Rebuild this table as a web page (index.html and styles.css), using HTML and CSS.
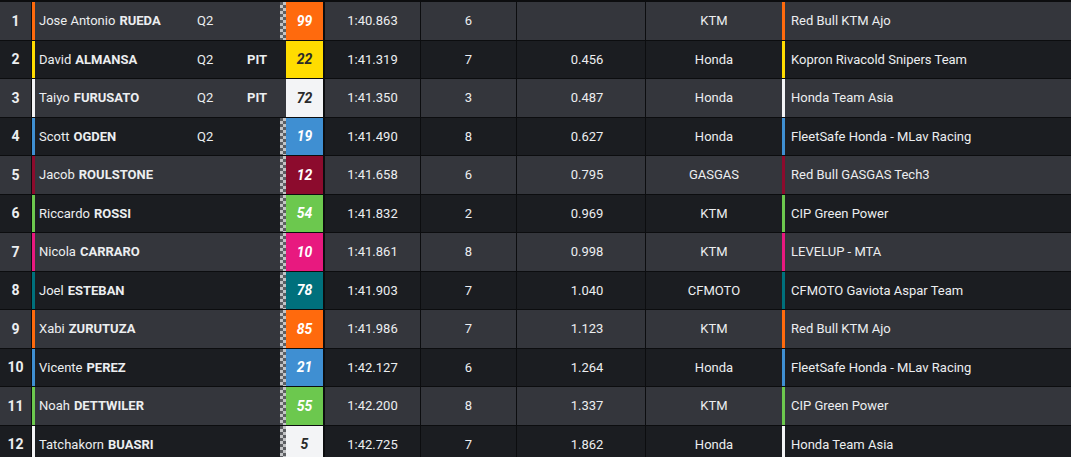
FILE: index.html
```html
<!DOCTYPE html>
<html>
<head>
<meta charset="utf-8">
<link rel="stylesheet" href="styles.css">
</head>
<body>
<div class="table">
  <div class="row odd">
    <div class="pos">1</div><div class="bar c-ktm"></div>
    <div class="name">Jose Antonio <b>RUEDA</b></div><div class="q">Q2</div><div class="pit"></div>
    <div class="chk"></div><div class="num c-ktm">99</div>
    <div class="time">1:40.863</div><div class="laps">6</div><div class="gap"></div>
    <div class="mfr">KTM</div><div class="bar c-ktm"></div><div class="team">Red Bull KTM Ajo</div>
  </div>
  <div class="row even">
    <div class="pos">2</div><div class="bar c-kopron"></div>
    <div class="name">David <b>ALMANSA</b></div><div class="q">Q2</div><div class="pit">PIT</div>
    <div class="chk off"></div><div class="num c-kopron dark">22</div>
    <div class="time">1:41.319</div><div class="laps">7</div><div class="gap">0.456</div>
    <div class="mfr">Honda</div><div class="bar c-kopron"></div><div class="team">Kopron Rivacold Snipers Team</div>
  </div>
  <div class="row odd">
    <div class="pos">3</div><div class="bar c-asia"></div>
    <div class="name">Taiyo <b>FURUSATO</b></div><div class="q">Q2</div><div class="pit">PIT</div>
    <div class="chk off"></div><div class="num c-asia dark">72</div>
    <div class="time">1:41.350</div><div class="laps">3</div><div class="gap">0.487</div>
    <div class="mfr">Honda</div><div class="bar c-asia"></div><div class="team">Honda Team Asia</div>
  </div>
  <div class="row even">
    <div class="pos">4</div><div class="bar c-mlav"></div>
    <div class="name">Scott <b>OGDEN</b></div><div class="q">Q2</div><div class="pit"></div>
    <div class="chk"></div><div class="num c-mlav">19</div>
    <div class="time">1:41.490</div><div class="laps">8</div><div class="gap">0.627</div>
    <div class="mfr">Honda</div><div class="bar c-mlav"></div><div class="team">FleetSafe Honda - MLav Racing</div>
  </div>
  <div class="row odd">
    <div class="pos">5</div><div class="bar c-tech3"></div>
    <div class="name">Jacob <b>ROULSTONE</b></div><div class="q"></div><div class="pit"></div>
    <div class="chk"></div><div class="num c-tech3">12</div>
    <div class="time">1:41.658</div><div class="laps">6</div><div class="gap">0.795</div>
    <div class="mfr">GASGAS</div><div class="bar c-tech3"></div><div class="team">Red Bull GASGAS Tech3</div>
  </div>
  <div class="row even">
    <div class="pos">6</div><div class="bar c-cip"></div>
    <div class="name">Riccardo <b>ROSSI</b></div><div class="q"></div><div class="pit"></div>
    <div class="chk"></div><div class="num c-cip">54</div>
    <div class="time">1:41.832</div><div class="laps">2</div><div class="gap">0.969</div>
    <div class="mfr">KTM</div><div class="bar c-cip"></div><div class="team">CIP Green Power</div>
  </div>
  <div class="row odd">
    <div class="pos">7</div><div class="bar c-mta"></div>
    <div class="name">Nicola <b>CARRARO</b></div><div class="q"></div><div class="pit"></div>
    <div class="chk"></div><div class="num c-mta">10</div>
    <div class="time">1:41.861</div><div class="laps">8</div><div class="gap">0.998</div>
    <div class="mfr">KTM</div><div class="bar c-mta"></div><div class="team">LEVELUP - MTA</div>
  </div>
  <div class="row even">
    <div class="pos">8</div><div class="bar c-cf"></div>
    <div class="name">Joel <b>ESTEBAN</b></div><div class="q"></div><div class="pit"></div>
    <div class="chk"></div><div class="num c-cf">78</div>
    <div class="time">1:41.903</div><div class="laps">7</div><div class="gap">1.040</div>
    <div class="mfr">CFMOTO</div><div class="bar c-cf"></div><div class="team">CFMOTO Gaviota Aspar Team</div>
  </div>
  <div class="row odd">
    <div class="pos">9</div><div class="bar c-ktm"></div>
    <div class="name">Xabi <b>ZURUTUZA</b></div><div class="q"></div><div class="pit"></div>
    <div class="chk"></div><div class="num c-ktm">85</div>
    <div class="time">1:41.986</div><div class="laps">7</div><div class="gap">1.123</div>
    <div class="mfr">KTM</div><div class="bar c-ktm"></div><div class="team">Red Bull KTM Ajo</div>
  </div>
  <div class="row even">
    <div class="pos">10</div><div class="bar c-mlav"></div>
    <div class="name">Vicente <b>PEREZ</b></div><div class="q"></div><div class="pit"></div>
    <div class="chk"></div><div class="num c-mlav">21</div>
    <div class="time">1:42.127</div><div class="laps">6</div><div class="gap">1.264</div>
    <div class="mfr">Honda</div><div class="bar c-mlav"></div><div class="team">FleetSafe Honda - MLav Racing</div>
  </div>
  <div class="row odd">
    <div class="pos">11</div><div class="bar c-cip"></div>
    <div class="name">Noah <b>DETTWILER</b></div><div class="q"></div><div class="pit"></div>
    <div class="chk"></div><div class="num c-cip">55</div>
    <div class="time">1:42.200</div><div class="laps">8</div><div class="gap">1.337</div>
    <div class="mfr">KTM</div><div class="bar c-cip"></div><div class="team">CIP Green Power</div>
  </div>
  <div class="row even">
    <div class="pos">12</div><div class="bar c-asia"></div>
    <div class="name">Tatchakorn <b>BUASRI</b></div><div class="q"></div><div class="pit"></div>
    <div class="chk"></div><div class="num c-asia dark">5</div>
    <div class="time">1:42.725</div><div class="laps">7</div><div class="gap">1.862</div>
    <div class="mfr">Honda</div><div class="bar c-asia"></div><div class="team">Honda Team Asia</div>
  </div>
</div>
</body>
</html>
```
FILE: styles.css
```css
html, body {
  margin: 0;
  padding: 0;
  background: #0c0d0f;
}
body {
  font-family: Roboto, "Liberation Sans", sans-serif;
  font-size: 13px;
  color: #eceef0;
  overflow: hidden;
}
.table {
  display: flex;
  flex-direction: column;
  padding-top: 2px;
}
.row {
  display: grid;
  grid-template-columns: 32px 3px 161px 44px 40px 6px 37px 97px 96px 129px 137px 3px 1fr;
  height: 37.5px;
  margin-bottom: 1px;
  align-items: stretch;
  flex-shrink: 0;
}
.row > div {
  display: flex;
  align-items: center;
  white-space: nowrap;
  overflow: hidden;
}
.odd > div { background: #34363c; }
.even > div { background: #1b1d21; }
.pos {
  justify-content: center;
  font-weight: 700;
  font-size: 14px;
  border-right: 1px solid #0c0d0f;
}
.name { padding-left: 4px; }
.name b { font-weight: 700; margin-left: 4px; }
.q { padding-left: 1px; }
.pit { padding-left: 7px; font-weight: 700; }
.row > .chk {
  background-color: #5c5e62;
  background-image: conic-gradient(#c2c3c5 25%, #5c5e62 0 50%, #c2c3c5 0 75%, #5c5e62 0);
  background-size: 6px 6px;
}
.row > .chk.off { background-image: none; }
.odd > .chk.off { background: #34363c; }
.even > .chk.off { background: #1b1d21; }
.num {
  justify-content: center;
  font-weight: 700;
  font-style: italic;
  font-size: 14px;
  color: #ffffff;
}
.num.dark { color: #2a2a2a; }
.time {
  justify-content: center;
  border-left: 2px solid #0c0d0f;
}
.laps {
  justify-content: center;
  border-left: 1px solid #0c0d0f;
}
.gap {
  justify-content: center;
  padding-left: 12px;
  border-left: 1px solid #0c0d0f;
}
.mfr {
  justify-content: center;
  border-left: 1px solid #0c0d0f;
}
.team { padding-left: 6px; }

.row > .c-ktm { background: #ff6a0d; }
.row > .c-kopron { background: #ffdc00; }
.row > .c-asia { background: #f3f4f6; }
.row > .c-mlav { background: #3f8fd2; }
.row > .c-tech3 { background: #8c0b2d; }
.row > .c-cip { background: #6cc84e; }
.row > .c-mta { background: #e8197f; }
.row > .c-cf { background: #00707c; }
```
